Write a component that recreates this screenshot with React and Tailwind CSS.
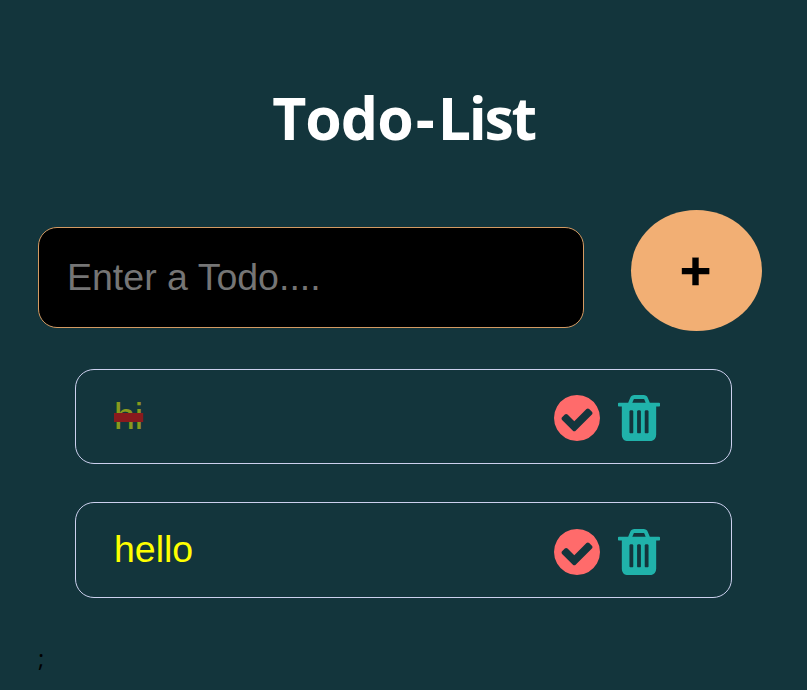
const items = [
  { id: 1, text: "hi", done: true },
  { id: 2, text: "hello", done: false },
];

function CheckCircle() {
  return (
    <svg viewBox="128 128 1536 1536" className="h-[46px] w-[46px]" fill="#ff6b6b">
      <path d="M1412 734q0-28-18-46l-91-90q-19-19-45-19t-45 19l-408 407-226-226q-19-19-45-19t-45 19l-91 90q-18 18-18 46 0 27 18 45l362 362q19 19 45 19 27 0 46-19l543-543q18-18 18-45zm252 162q0 209-103 385.5t-279.5 279.5-385.5 103-385.5-103-279.5-279.5-103-385.5 103-385.5 279.5-279.5 385.5-103 385.5 103 279.5 279.5 103 385.5z" />
    </svg>
  );
}

function Trash() {
  return (
    <svg viewBox="192 128 1408 1536" className="h-[46px] w-[42px]" fill="#20b2aa">
      <path d="M704 1376v-704q0-14-9-23t-23-9h-64q-14 0-23 9t-9 23v704q0 14 9 23t23 9h64q14 0 23-9t9-23zm256 0v-704q0-14-9-23t-23-9h-64q-14 0-23 9t-9 23v704q0 14 9 23t23 9h64q14 0 23-9t9-23zm256 0v-704q0-14-9-23t-23-9h-64q-14 0-23 9t-9 23v704q0 14 9 23t23 9h64q14 0 23-9t9-23zm-544-992h448l-48-117q-7-9-17-11h-317q-10 2-17 11zm928 32v64q0 14-9 23t-23 9h-96v948q0 83-47 143.5t-113 60.5h-832q-66 0-113-58.5t-47-141.5v-952h-96q-14 0-23-9t-9-23v-64q0-14 9-23t23-9h309l70-167q15-37 54-63t79-26h320q40 0 79 26t54 63l70 167h309q14 0 23 9t9 23z" />
    </svg>
  );
}

export default function App() {
  return (
    <div className="h-[690px] w-[807px] overflow-hidden bg-[#13353c] pt-[78px] font-['Liberation_Sans',Arial,sans-serif]">
      <h1 className="text-center font-['Open_Sans','Noto_Sans',sans-serif] text-[59px] leading-[78px] font-bold text-white">
        <span className="tracking-[-1px]">Todo</span>
        <span className="pr-[3px] pl-[3px]">-</span>
        <span className="tracking-[-2.3px]">List</span>
      </h1>
      <div className="mt-[54px] flex items-center pl-[38px]">
        <input
          placeholder="Enter a Todo...."
          className="mt-[14px] h-[101px] w-[546px] rounded-[19px] border border-[#d49a62] bg-black px-[28px] text-[37.5px] text-white placeholder:text-[#757575] placeholder:opacity-100"
        />
        <button className="ml-[47px] h-[121px] w-[131px] rounded-[50%] bg-[#f2af74] pr-[2px] pb-px text-[54px] leading-[120px] font-bold text-black [-webkit-text-stroke:0.4px_black]">
          +
        </button>
      </div>
      <ul className="mt-[38px] ml-[75px] flex w-[657px] flex-col gap-[38px]">
        {items.map((item) => (
          <li
            key={item.id}
            className="flex h-[95px] items-center rounded-[19px] border border-[#ccd0ee] pr-[71px] pl-[38px] last:h-[96px] last:pt-px"
          >
            <span
              className={
                item.done
                  ? "mb-[2px] text-[37.5px] leading-[44px] text-[#ffff00] line-through decoration-[#ff0000] decoration-[9px] opacity-50"
                  : "mb-[4px] text-[37.5px] leading-[44px] text-[#ffff00]"
              }
            >
              {item.text}
            </span>
            <div className="ml-auto flex gap-[18px] pt-[2px]">
              <CheckCircle />
              <Trash />
            </div>
          </li>
        ))}
      </ul>
      <p className="mt-[40px] ml-[38px] font-['Open_Sans','Noto_Sans',sans-serif] text-[24px] leading-[40px] text-black">;</p>
    </div>
  );
}
